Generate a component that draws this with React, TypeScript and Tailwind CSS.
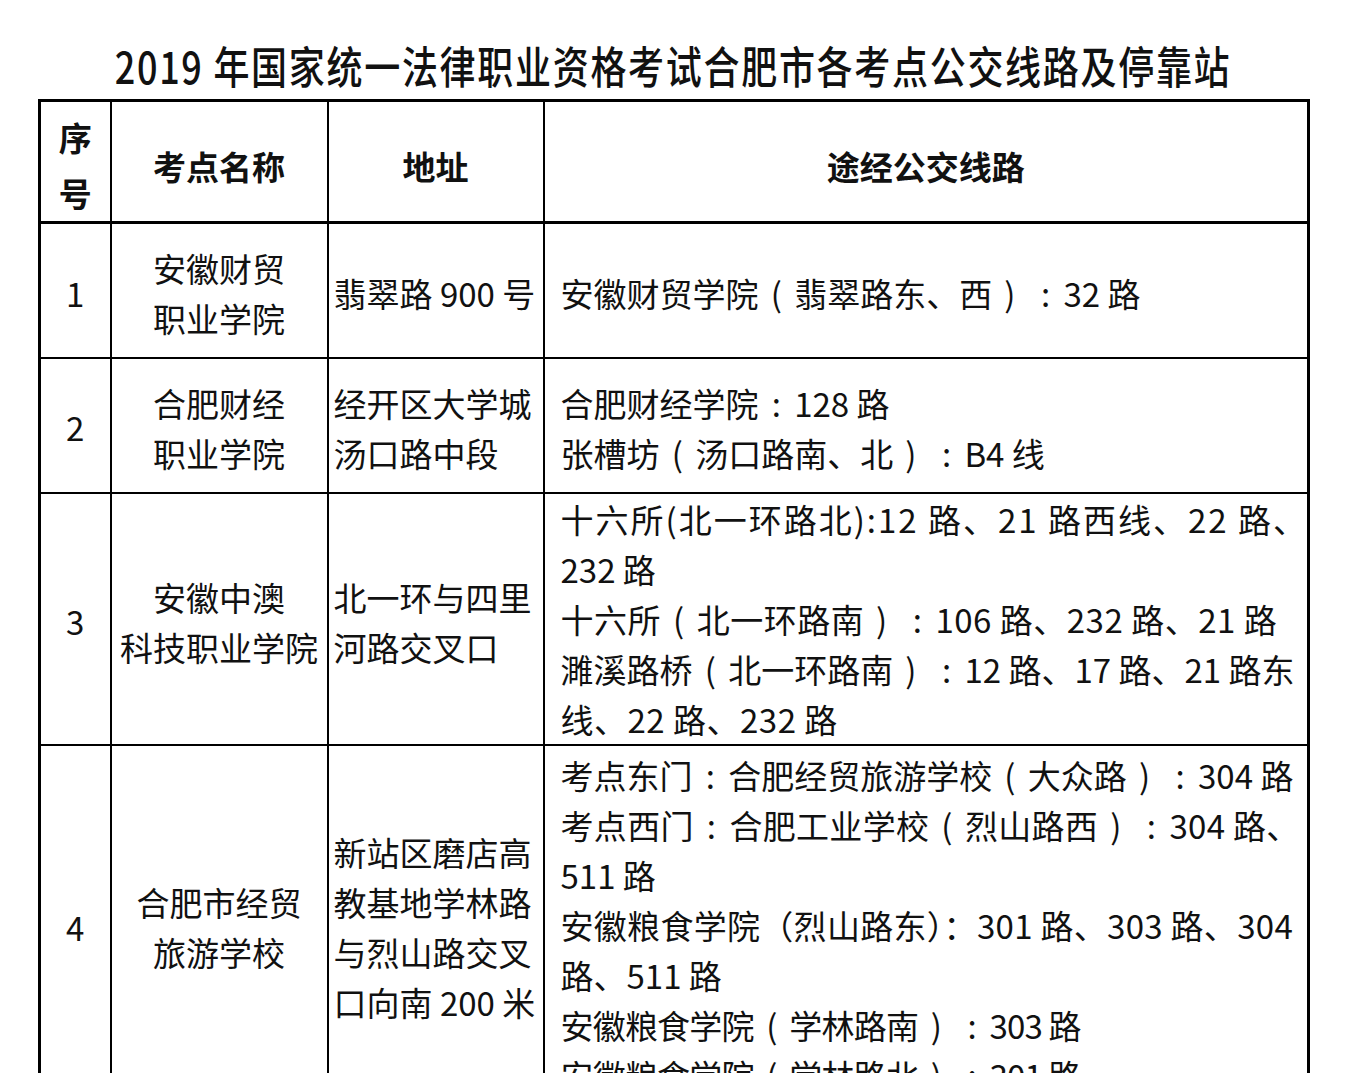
import React from "react";

type Line = { t: string; wide?: boolean; tr?: string };

type Row = {
	no: string;
	name: string[];
	addr: string[];
	routes: Line[];
	h: string;
	routePad: string;
};

const rows: Row[] = [
	{
		no: "1",
		name: ["安徽财贸", "职业学院"],
		addr: ["翡翠路 900 号"],
		routes: [{ t: "安徽财贸学院（翡翠路东、西）：32 路", wide: true }],
		h: "h-[135px]",
		routePad: "pt-[6px]",
	},
	{
		no: "2",
		name: ["合肥财经", "职业学院"],
		addr: ["经开区大学城", "汤口路中段"],
		routes: [
			{ t: "合肥财经学院：128 路", wide: true },
			{ t: "张槽坊（汤口路南、北）：B4 线", wide: true },
		],
		h: "h-[135px]",
		routePad: "pt-[6px]",
	},
	{
		no: "3",
		name: ["安徽中澳", "科技职业学院"],
		addr: ["北一环与四里", "河路交叉口"],
		routes: [
			{ t: "十六所(北一环路北):12 路、21 路西线、22 路、", tr: "tracking-[2px]" },
			{ t: "232 路" },
			{ t: "十六所（北一环路南）：106 路、232 路、21 路", wide: true, tr: "tracking-[0.5px]" },
			{ t: "濉溪路桥（北一环路南）：12 路、17 路、21 路东", wide: true },
			{ t: "线、22 路、232 路", tr: "tracking-[0.5px]" },
		],
		h: "h-[249px]",
		routePad: "pt-0",
	},
	{
		no: "4",
		name: ["合肥市经贸", "旅游学校"],
		addr: ["新站区磨店高", "教基地学林路", "与烈山路交叉", "口向南 200 米"],
		routes: [
			{ t: "考点东门：合肥经贸旅游学校（大众路）：304 路", wide: true },
			{ t: "考点西门：合肥工业学校（烈山路西）：304 路、", wide: true, tr: "tracking-[0.3px]" },
			{ t: "511 路" },
			{ t: "安徽粮食学院（烈山路东）：301 路、303 路、304", tr: "tracking-[0.3px]" },
			{ t: "路、511 路" },
			{ t: "安徽粮食学院（学林路南）：303 路", wide: true, tr: "tracking-[-0.8px]" },
			{ t: "安徽粮食学院（学林路北）：301 路", wide: true, tr: "tracking-[-0.8px]" },
		],
		h: "h-[360px]",
		routePad: "pt-[2px]",
	},
];

const punct: Record<string, string> = { "（": "(", "）": ")", "：": ":" };

// Word-style full-width punctuation: glyph centred in its own cell
const RouteLine = ({ line }: { line: Line }) => {
	const parts = line.wide
		? Array.from(line.t).map((c, i) =>
				punct[c] ? (
					<span key={i} className="inline-block w-[1.08em] text-center">
						{punct[c]}
					</span>
				) : (
					c
				),
		  )
		: line.t;
	return <div className={`whitespace-nowrap leading-[50px] ${line.tr ?? ""}`}>{parts}</div>;
};

const Lines = ({ lines }: { lines: string[] }) => (
	<>
		{lines.map((l, i) => (
			<div key={i} className="whitespace-nowrap leading-[50px]">
				{l}
			</div>
		))}
	</>
);

export default function App() {
	return (
		<div className="min-h-screen bg-white text-[#111] font-['Noto_Sans_CJK_SC',sans-serif]">
			{/* Title */}
			<div className="flex justify-center pt-[48px] h-[99px]">
				<h1 className="text-[36px] leading-none font-medium tracking-[1.7px] scale-y-[1.22] whitespace-nowrap">
					2019 年国家统一法律职业资格考试合肥市各考点公交线路及停靠站
				</h1>
			</div>

			<table className="ml-[38px] w-[1269px] table-fixed border-collapse border-[3px] border-black text-[33px]">
				<colgroup>
					<col className="w-[71px]" />
					<col className="w-[217px]" />
					<col className="w-[216px]" />
					<col className="w-[765px]" />
				</colgroup>
				<thead>
					<tr className="h-[122px] border-b-[3px] border-black font-bold">
						<th className="border-r-2 border-black pt-[6px] align-middle">
							<div className="leading-[56px]">序</div>
							<div className="leading-[56px]">号</div>
						</th>
						<th className="border-r-2 border-black pt-[10px]">考点名称</th>
						<th className="border-r-2 border-black pt-[10px]">地址</th>
						<th className="pt-[10px]">途经公交线路</th>
					</tr>
				</thead>
				<tbody>
					{rows.map((r) => (
						<tr key={r.no} className={`${r.h} border-b-2 border-black`}>
							<td className="border-r-2 border-black text-center align-middle pt-[6px]">{r.no}</td>
							<td className="border-r-2 border-black text-center align-middle pt-[6px]">
								<Lines lines={r.name} />
							</td>
							<td className="border-r-2 border-black pl-[5px] align-middle pt-[6px]">
								<Lines lines={r.addr} />
							</td>
							<td className={`pl-[16px] align-middle ${r.routePad}`}>
								{r.routes.map((l, i) => (
									<RouteLine key={i} line={l} />
								))}
							</td>
						</tr>
					))}
				</tbody>
			</table>
		</div>
	);
}
